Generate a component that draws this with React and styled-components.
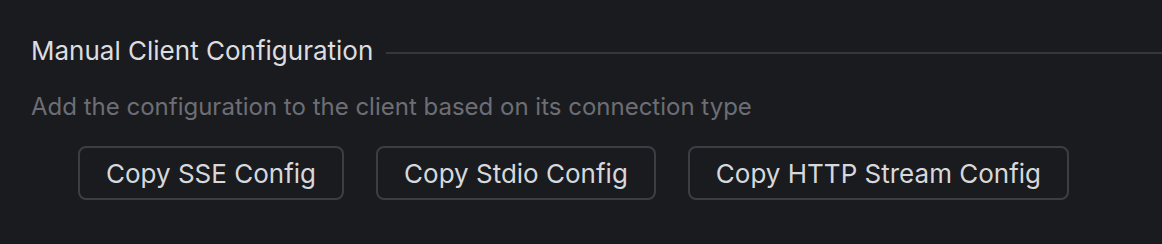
import React from "react";
import styled, { createGlobalStyle } from "styled-components";

const GlobalStyle = createGlobalStyle`
  body {
    margin: 0;
    background: #1a1b1e;
    font-family: Inter, "Noto Sans", sans-serif;
  }
`;

const Section = styled.section`
  padding: 35px 0 0 31px;
  height: 244px;
  box-sizing: border-box;
`;

const Divider = styled.div`
  display: flex;
  align-items: center;
  gap: 13px;
`;

const Title = styled.h3`
  margin: 0;
  font-size: 26px;
  font-weight: 400;
  color: #dcdde0;
  white-space: nowrap;
`;

const Rule = styled.div`
  flex: 1;
  height: 2px;
  margin-top: 4px;
  background: #36373c;
`;

const Desc = styled.p`
  margin: 26px 0 0;
  font-size: 24px;
  color: #6d6e75;
`;

const Buttons = styled.div`
  display: flex;
  gap: 32px;
  margin: 25px 0 0 47px;
`;

const Button = styled.button`
  height: 54px;
  padding: 0 26px;
  background: transparent;
  border: 2px solid #3d3e44;
  border-radius: 8px;
  color: #d7d8db;
  font-family: inherit;
  font-size: 26px;
  cursor: pointer;
`;

const configs = ["SSE", "Stdio", "HTTP Stream"];

export default function App() {
  return (
    <>
      <GlobalStyle />
      <Section>
        <Divider>
          <Title>Manual Client Configuration</Title>
          <Rule />
        </Divider>
        <Desc>Add the configuration to the client based on its connection type</Desc>
        <Buttons>
          {configs.map((c) => (
            <Button key={c}>Copy {c} Config</Button>
          ))}
        </Buttons>
      </Section>
    </>
  );
}
